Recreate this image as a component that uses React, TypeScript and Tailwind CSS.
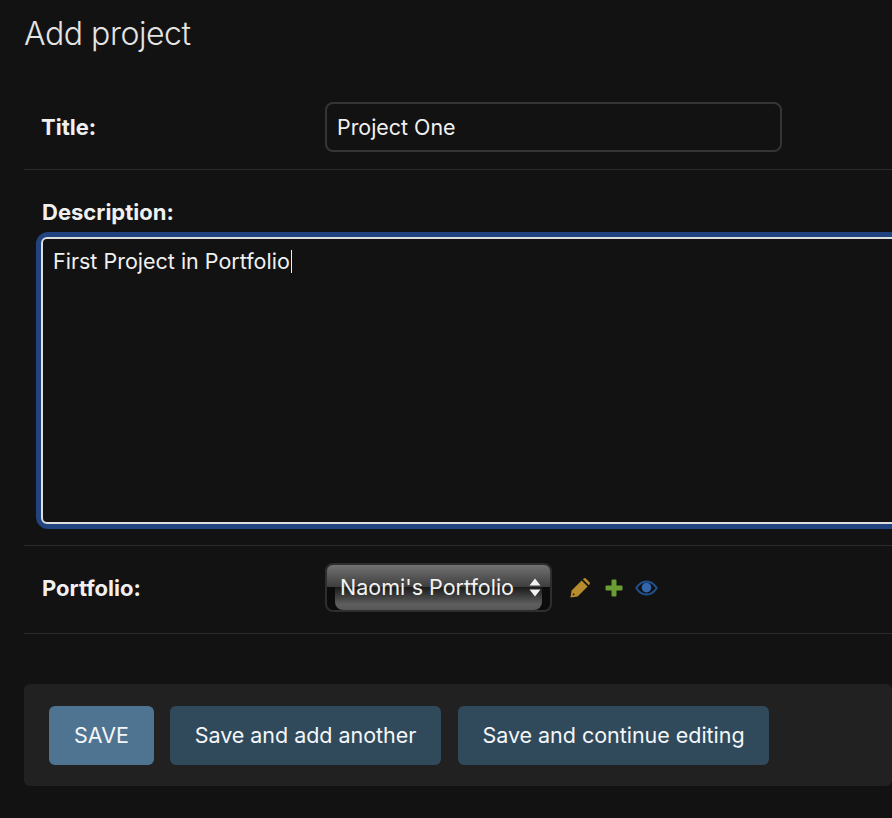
function PencilIcon() {
  return (
    <svg width="20" height="20" viewBox="0 0 20 20" className="block">
      <path d="M0.5 19.5L1.6 12.4L11.6 2.4L17.6 8.4L7.6 18.4Z" fill="#b68c2d" />
      <path d="M12.8 1.2L13.8 0.4Q14.8 -0.2 15.8 0.4L19.6 4.2Q20.2 5.2 19.6 6.2L18.8 7.2Z" fill="#b68c2d" />
      <path d="M2.6 17.4L3.2 15L5 16.8Z" fill="#2a2210" />
    </svg>
  )
}

function PlusIcon() {
  return (
    <svg width="18" height="18" viewBox="0 0 18 18" className="block">
      <path d="M6.5 1.5a1 1 0 0 1 1-1h3a1 1 0 0 1 1 1v5h5a1 1 0 0 1 1 1v3a1 1 0 0 1-1 1h-5v5a1 1 0 0 1-1 1h-3a1 1 0 0 1-1-1v-5h-5a1 1 0 0 1-1-1v-3a1 1 0 0 1 1-1h5Z" fill="#6a9e35" />
    </svg>
  )
}

function EyeIcon() {
  return (
    <svg width="23" height="16" viewBox="0 0 23 16" className="block">
      <path d="M1.2 8C4 3.6 7.4 1.4 11.5 1.4S19 3.6 21.8 8C19 12.4 15.6 14.6 11.5 14.6S4 12.4 1.2 8Z" fill="none" stroke="#20508f" strokeWidth="2" />
      <circle cx="11.5" cy="7.6" r="4.8" fill="#3566ad" />
    </svg>
  )
}

function PortfolioSelect() {
  return (
    <div className="relative h-[49px] w-[227px] overflow-hidden rounded-lg border-2 border-[#2e2e2e] bg-[linear-gradient(to_bottom,#727272_0%,#3c3c3c_50%,#0c0c0c_50%,#0c0c0c_100%)]">
      <div className="absolute bottom-0 left-2 right-2 h-[23px] rounded-b-lg bg-[linear-gradient(to_bottom,#1a1a1a_0%,#5e5e5e_75%,#565656_100%)]" />
      <div className="relative flex h-full items-center justify-between pl-[13px] pr-[9px]">
        <span className="text-[21.5px] text-[#f2f2f2]">Naomi's Portfolio</span>
        <svg width="12" height="19" viewBox="0 0 12 19" className="block">
          <path d="M6 0.5L11.5 7.5H0.5Z" fill="#f2f2f2" />
          <path d="M6 18.5L11.5 11.5H0.5Z" fill="#f2f2f2" />
        </svg>
      </div>
    </div>
  )
}

export default function App() {
  return (
    <main className="h-[818px] w-[892px] overflow-hidden bg-[#121212] pl-6 font-['Inter',sans-serif] text-[#f0f0f0]">
      <h1 className="flex h-[66px] items-center pt-px text-[32px] font-light leading-none tracking-[-0.45px] text-[#e4e4e4]">Add project</h1>

      <div className="flex h-[104px] items-center border-b border-[#2a2a2a] pl-[17px] pt-[18px]">
        <label className="w-[284px] pt-0.5 text-[22px] font-bold">Title:</label>
        <input
          readOnly
          value="Project One"
          className="h-[50px] w-[457px] rounded-lg border-2 border-[#353535] bg-[#121212] px-[10px] text-[21.4px] text-[#f0f0f0] outline-none"
        />
      </div>

      <div className="h-[376px] border-b border-[#2a2a2a] pl-3 pt-[29px]">
        <label className="block h-[33px] pl-[6px] text-[22px] font-bold leading-[26px]">Description:</label>
        <div className="h-[297px] w-[900px] rounded-xl border-[5px] border-[#21437f] bg-[#121212]">
          <div className="h-full rounded-md border-2 border-[#dedede] px-[10px] pt-[7px] text-[21.5px] leading-[30px]">
            First Project in Portfolio<span className="ml-px inline-block h-[23px] w-px translate-y-[4px] bg-[#f0f0f0]" />
          </div>
        </div>
      </div>

      <div className="flex h-[88px] items-center border-b border-[#2a2a2a] pb-1 pl-[18px]">
        <label className="w-[283px] pt-0.5 text-[22px] font-bold">Portfolio:</label>
        <PortfolioSelect />
        <div className="ml-[18px] flex items-center">
          <PencilIcon />
          <span className="ml-[15px]"><PlusIcon /></span>
          <span className="ml-3"><EyeIcon /></span>
        </div>
      </div>

      <div className="mt-[50px] flex h-[102px] items-center gap-4 rounded-md bg-[#212121] pl-[25px] text-[21.5px] tracking-[-0.03px] text-[#f4f6f8]">
        <button className="h-[59px] w-[105px] rounded-md bg-[#4f7491]">SAVE</button>
        <button className="h-[59px] w-[271px] rounded-md bg-[#304a5c]">Save and add another</button>
        <button className="ml-px h-[59px] w-[311px] rounded-md bg-[#304a5c]">Save and continue editing</button>
      </div>
    </main>
  )
}
